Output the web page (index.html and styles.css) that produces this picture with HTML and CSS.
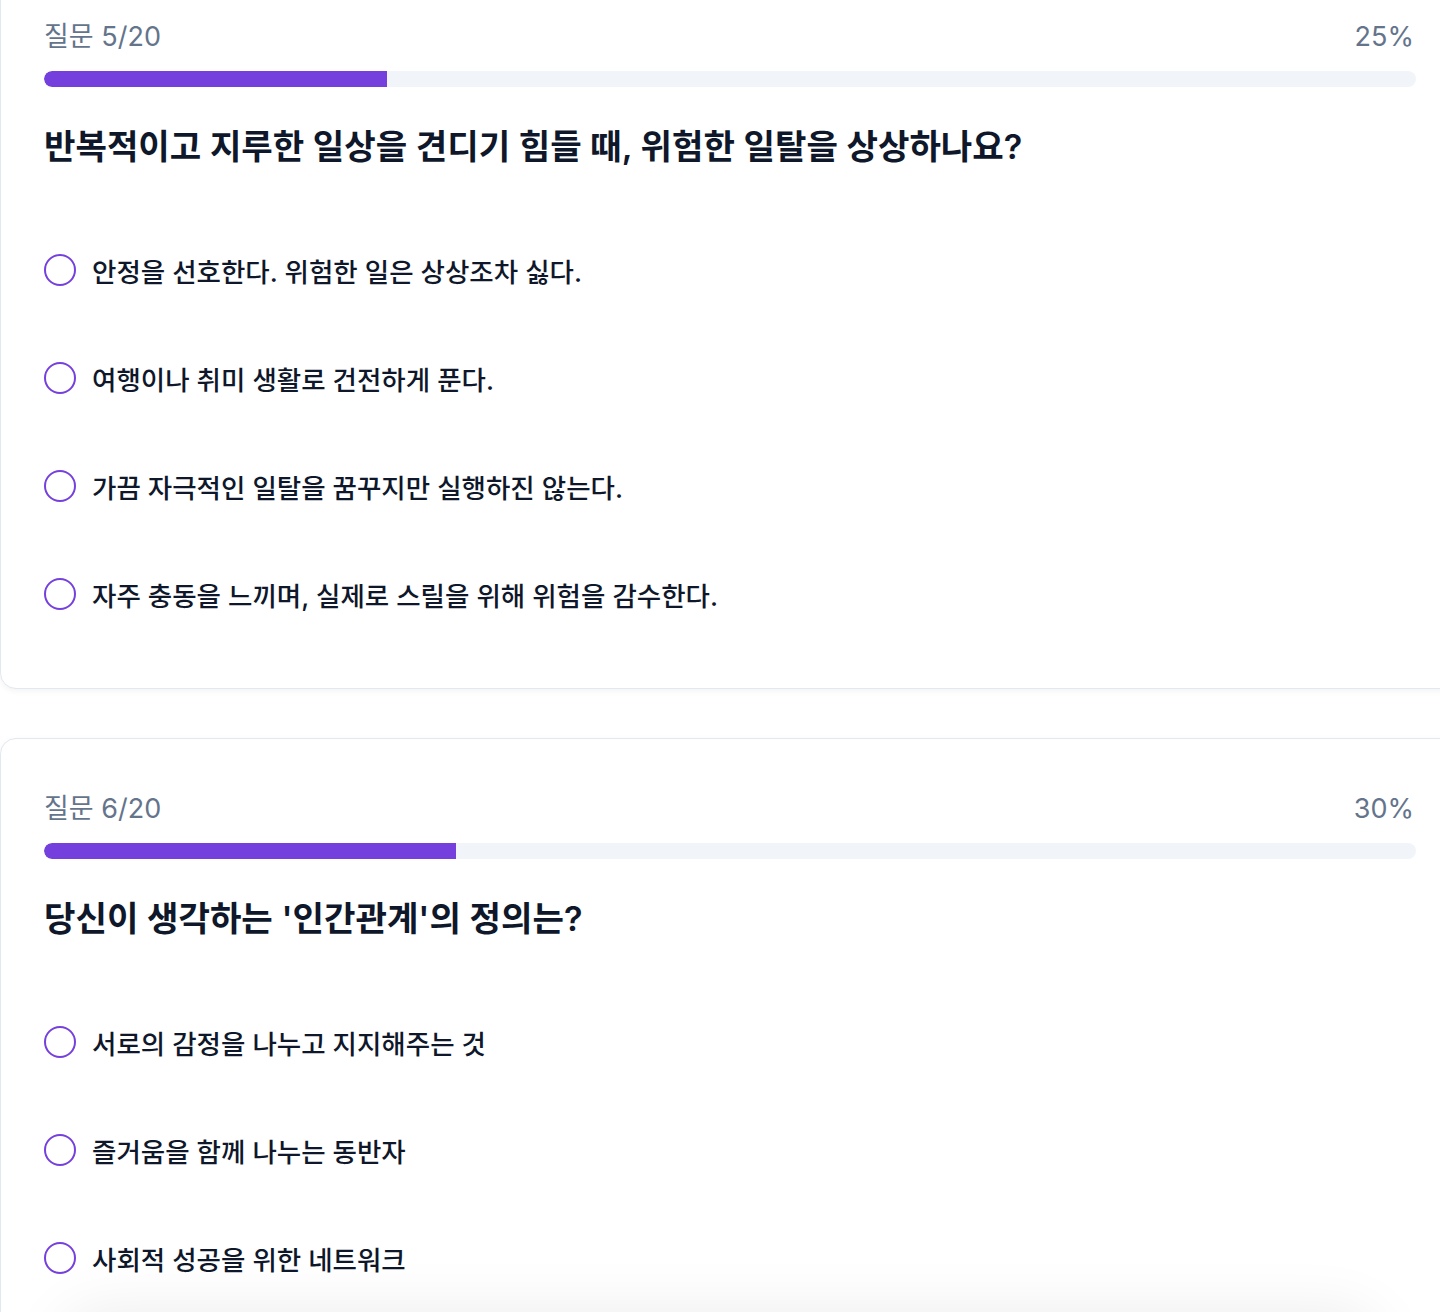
FILE: index.html
```html
<!DOCTYPE html>
<html lang="ko">
<head>
<meta charset="utf-8">
<title>질문</title>
<link rel="stylesheet" href="styles.css">
</head>
<body>
<main class="page">
  <section class="card card-first">
    <div class="meta">
      <span class="count">질문 5/20</span>
      <span class="percent">25%</span>
    </div>
    <div class="track"><div class="fill" style="width:25%"></div></div>
    <h2 class="question">반복적이고 지루한 일상을 견디기 힘들 때, 위험한 일탈을 상상하나요?</h2>
    <ul class="options">
      <li class="option"><span class="radio"></span><span class="label">안정을 선호한다. 위험한 일은 상상조차 싫다.</span></li>
      <li class="option"><span class="radio"></span><span class="label">여행이나 취미 생활로 건전하게 푼다.</span></li>
      <li class="option"><span class="radio"></span><span class="label">가끔 자극적인 일탈을 꿈꾸지만 실행하진 않는다.</span></li>
      <li class="option"><span class="radio"></span><span class="label">자주 충동을 느끼며, 실제로 스릴을 위해 위험을 감수한다.</span></li>
    </ul>
  </section>
  <section class="card">
    <div class="meta">
      <span class="count">질문 6/20</span>
      <span class="percent">30%</span>
    </div>
    <div class="track"><div class="fill" style="width:30%"></div></div>
    <h2 class="question">당신이 생각하는 '인간관계'의 정의는?</h2>
    <ul class="options">
      <li class="option"><span class="radio"></span><span class="label">서로의 감정을 나누고 지지해주는 것</span></li>
      <li class="option"><span class="radio"></span><span class="label">즐거움을 함께 나누는 동반자</span></li>
      <li class="option"><span class="radio"></span><span class="label">사회적 성공을 위한 네트워크</span></li>
    </ul>
  </section>
</main>
<div class="bottom-glow"></div>
</body>
</html>
```

FILE: styles.css
```css
html, body {
  margin: 0;
  padding: 0;
  overflow: hidden;
  background: #ffffff;
}
body {
  font-family: Inter, "Noto Sans CJK KR", sans-serif;
  color: #0f172a;
  width: 1440px;
  height: 1312px;
  position: relative;
}
.page {
  width: 1460px;
  margin-top: -34px;
  display: flex;
  flex-direction: column;
  gap: 49px;
}
.card {
  background: #ffffff;
  border: 1px solid #e2e8f0;
  border-radius: 16px;
  box-shadow: 0 2px 6px rgba(15, 23, 42, 0.05);
  padding: 50px 43px 40px 43px;
}
.meta {
  display: flex;
  justify-content: space-between;
  align-items: center;
  height: 36px;
  font-size: 27px;
  color: #64748b;
  padding-right: 2px;
}
.count {
  position: relative;
  top: -1px;
}
.percent {
  position: relative;
  top: 1px;
}
.track {
  margin-top: 18px;
  height: 16px;
  border-radius: 8px;
  background: #f1f5f9;
  overflow: hidden;
}
.fill {
  height: 100%;
  background: #753fdd;
  border-radius: 8px 0 0 8px;
}
.question {
  margin: 36px 0 0 0;
  font-size: 34.2px;
  line-height: 48px;
  font-weight: 600;
  color: #0f172a;
}
.options {
  list-style: none;
  margin: 45px 0 0 0;
  padding: 0;
  display: flex;
  flex-direction: column;
}
.option {
  display: flex;
  align-items: center;
  gap: 16px;
  height: 108px;
}
.radio {
  width: 32px;
  height: 32px;
  box-sizing: border-box;
  border: 2px solid #7540de;
  border-radius: 50%;
  flex: none;
}
.label {
  font-size: 26.5px;
  font-weight: 500;
  color: #0f172a;
}
.bottom-glow {
  position: fixed;
  left: 60px;
  right: 60px;
  bottom: -80px;
  height: 80px;
  border-radius: 40px;
  box-shadow: 0 0 60px rgba(0, 0, 0, 0.08);
  background: #f3f3f3;
}
```
